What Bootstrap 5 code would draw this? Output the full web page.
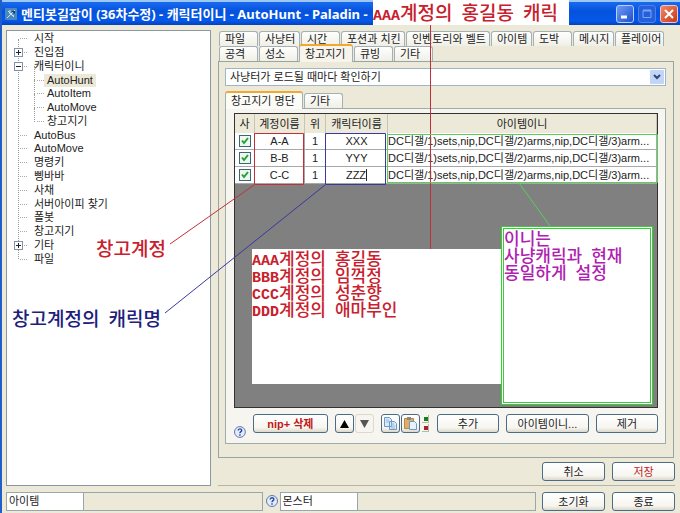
<!DOCTYPE html>
<html lang="ko">
<head>
<meta charset="utf-8">
<meta name="viewport" content="width=device-width, initial-scale=1">
<title>멘티봇길잡이 (36차수정) - 캐릭터이니 - AutoHunt - Paladin</title>
<link href="https://cdn.jsdelivr.net/npm/bootstrap@5.3.0/dist/css/bootstrap.min.css" rel="stylesheet">
<style>
  body { background: #ece9d8; color: #222; font: 11px/14px "Liberation Sans", "Noto Sans CJK KR", sans-serif; }
  .win { min-height: 100vh; border-left: 2px solid #1f5fc8; position: relative; overflow: hidden; }
  .titlebar { height: 25px; border-top: 2px solid #9cc8f4; background: linear-gradient(#1a6af0, #0552dc 40%, #0558e8 80%, #0442c0); color: #fff; font: bold 13px/22px "Noto Sans", "Noto Sans CJK KR", sans-serif; padding: 0 2px 0 3px; }
  .cap-btn { width: 18px; height: 18px; padding: 0; border: 1px solid #b8d0ff; border-radius: 3px; background: linear-gradient(135deg, #6f9cf4, #1c50d0); line-height: 0; }
  .cap-max { border-color: #4a80e8; background: #2560dc; }
  .cap-close { border-color: #f0c8c0; background: linear-gradient(135deg, #f08868, #c83818); }
  .work { padding: 5px 5px 0 4px; gap: 7px; }
  .pane { min-width: 0; padding-top: 1px; }
  .tree { width: 205px; background: #fff; border: 1px solid #8b98a4; padding: 1px 6px; }
  .nodes { height: 234px; display: grid; grid-auto-rows: 1fr; margin: 0; padding: 0; list-style: none; position: relative; }
  .nodes::before { content: ""; position: absolute; left: 5px; top: 7px; bottom: 7px; border-left: 1px dotted #999; }
  .nodes li { display: flex; align-items: center; position: relative; }
  .twig { width: 7px; margin: 0 4px 0 7px; border-top: 1px dotted #aaa; height: 0; }
  .sub .twig { margin: 0 0 0 24px; width: 7px; }
  .sub::before { content: ""; position: absolute; left: 21px; top: -7px; height: 14px; border-left: 1px dotted #999; }
  .pm { position: absolute; left: 1px; width: 9px; height: 9px; padding: 0; border: 1px solid #8093a8; background: #fff; line-height: 0; display: flex; }
  .nodes a { color: #222; text-decoration: none; padding: 0 3px; line-height: 13px; }
  .nodes a.picked { background: #ece9d8; }
  .tabrow { height: 15px; padding-left: 1px; }
  .subtabs { margin-top: 7px; padding-left: 0; }
  .tb { font-size: 11px; line-height: 13px; height: 15px; padding: 0 0 0 5px; margin-right: 1px; text-align: left; white-space: nowrap; color: #222; border: 1px solid #a4b0b4; border-bottom: 0; border-radius: 3px 3px 0 0; background: linear-gradient(#fefefe, #f0efe6); }
  .w39 { width: 39px; } .w41 { width: 41px; } .w49 { width: 49px; } .w64 { width: 64px; } .w84 { width: 84px; }
  .tb.on { border-top: 2px solid #f0a830; background: #f6f4ec; height: 18px; margin-top: -2px; position: relative; width: 54px; z-index: 1; }
  .tb.wide { width: 78px; background: #fbfbf8; }
  .outer { border: 1px solid #98a4a4; background: #ece9d8; padding: 6px 7px 13px 6px; margin-right: 1px; }
  .pick { height: 18px; font-size: 11px; line-height: 14px; padding: 0 18px 0 4px; border: 1px solid #9fb4c4; border-radius: 0; color: #222; background: #fff url("data:image/svg+xml,%3Csvg xmlns='http://www.w3.org/2000/svg' viewBox='0 0 14 14'%3E%3Crect width='14' height='14' rx='1' fill='%23c2d4f8'/%3E%3Cpath d='M4 5l3 3 3-3' fill='none' stroke='%23304870' stroke-width='2'/%3E%3C/svg%3E") no-repeat right 1px center / 14px 14px; }
  .inner { border: 1px solid #a0acac; background: #f6f5f0; padding: 4px 7px 10px 8px; }
  .gridbox { background: #808080; border: 1px solid #333; }
  .gridbox table { width: 100%; table-layout: fixed; border-collapse: separate; border-spacing: 0; color: #222; }
  .gridbox th { height: 19px; font-weight: 400; text-align: center; background: #ece9d8; padding: 0; border-right: 1px solid #c8c4b4; white-space: nowrap; }
  .gridbox td { height: 17px; text-align: center; background: #fff; padding: 0; border: 1px solid #a8a8a8; border-width: 0 1px 1px 0; line-height: 12px; white-space: nowrap; overflow: hidden; }
  .gridbox td.ini { text-align: left; }
  .gridbox .form-check-input { width: 12px; height: 12px; margin: 0 auto; float: none; display: block; border: 1px solid #386878; border-radius: 0; background: #f0f8f0; }
  .gridbox .form-check-input:checked { background: #eef8ee url("data:image/svg+xml,%3Csvg xmlns='http://www.w3.org/2000/svg' viewBox='0 0 10 10'%3E%3Cpath d='M2 4.5l2 2.5 4-5' fill='none' stroke='%2321a038' stroke-width='2'/%3E%3C/svg%3E"); }
  .pb { height: 19px; padding: 0; font-size: 11px; line-height: 16px; color: #222; border: 1px solid #4c6c86; border-radius: 3px; background: linear-gradient(#fff, #f6f5f0 75%, #dcd8cc); }
  .pb:hover { border-color: #4c6c86; }
  .pb.off { border-color: #dcd8cc; background: #f6f5f0; }
  .w19 { width: 19px; } .w63 { width: 63px; } .w76 { width: 76px; }
  .tools { margin-top: 6px; gap: 7px; }
  .pair { gap: 1px; }
  .tools .pb svg, .cap-btn svg { display: block; margin: auto; }
  .tools .help { align-self: flex-end; margin-bottom: -5px; }
  .danger { color: #c01818; }
  .actions { gap: 7px; padding: 4px 0 4px; }
  .rule { border-top: 1px solid #b8b4a4; }
  .status { height: 27px; padding: 0 5px 2px 4px; }
  .status .help { margin: 0 2px 4px 3px; }
  .ends { gap: 7px; margin-left: 6px; }
  .field { height: 19px; border: 1px solid #98a8a8; line-height: 16px; }
  .fname { width: 78px; background: #fff; padding: 0 2px; }
  .notes { position: absolute; left: -2px; top: 0; width: 680px; height: 513px; pointer-events: none; z-index: 3; }
  .note { position: absolute; font: 500 19px/17px "Noto Sans CJK KR", sans-serif; white-space: nowrap; }
  .note i { font: bold 15px/1px "Liberation Mono", monospace; white-space: pre; }
  .red { color: #c8202c; }
  .n-title { left: 373px; top: 0; width: 196px; height: 25px; background: #fff; line-height: 23px; }
  .n-acct { left: 96px; top: 239px; }
  .n-char { left: 12px; top: 309px; color: #20207c; }
  .n-list { left: 252px; top: 249px; width: 249px; height: 135px; background: #fff; font-size: 17px; }
  .n-ini { left: 501px; top: 226px; width: 152px; height: 179px; background: #fff; border: 3px double #34d034; color: #b020b0; font-size: 17px; }
</style>
<script src="https://cdn.jsdelivr.net/npm/bootstrap@5.3.0/dist/js/bootstrap.bundle.min.js"></script>
</head>
<body>
<div class="win d-flex flex-column">
  <header class="titlebar d-flex align-items-center">
    <svg width="12" height="12" viewBox="0 0 12 12" class="me-1"><rect width="12" height="12" rx="1" fill="#4c88c0"/><path d="M2 10L10 2M3 3l6 6M5 2v4l4 2" stroke="#c8e4f8" fill="none"/><path d="M6 3h4v3z" fill="#123c70"/></svg>
    <span class="text-nowrap">멘티봇길잡이 (36차수정) - 캐릭터이니 - AutoHunt - Paladin -</span>
    <span class="ms-auto d-flex gap-1">
      <button class="cap-btn" aria-label="최소화"><svg width="12" height="12"><path d="M2 9h6" stroke="#fff" stroke-width="3"/></svg></button>
      <button class="cap-btn cap-max" aria-label="최대화"><svg width="12" height="12"><path d="M2 2.500h8v7h-8z" stroke="#7ca4f4" fill="none"/><path d="M2 2.500h8" stroke="#7ca4f4" stroke-width="2"/></svg></button>
      <button class="cap-btn cap-close" aria-label="닫기"><svg width="12" height="12"><path d="M2 2l8 8M10 2l-8 8" stroke="#fff" stroke-width="2"/></svg></button>
    </span>
  </header>

  <main class="work d-flex flex-fill">
    <nav class="tree flex-shrink-0">
      <ul class="nodes">
        <li><span class="twig"></span><a href="#">시작</a></li>
        <li><span class="twig"></span><button class="pm" aria-label="펼치기"><svg width="7" height="7"><path d="M1 3.500h5M3.500 1v5" stroke="#222"/></svg></button><a href="#">진입점</a></li>
        <li><span class="twig"></span><button class="pm" aria-label="접기"><svg width="7" height="7"><path d="M1 3.500h5" stroke="#222"/></svg></button><a href="#">캐릭터이니</a></li>
        <li class="sub"><span class="twig"></span><a href="#" class="picked">AutoHunt</a></li>
        <li class="sub"><span class="twig"></span><a href="#">AutoItem</a></li>
        <li class="sub"><span class="twig"></span><a href="#">AutoMove</a></li>
        <li class="sub"><span class="twig"></span><a href="#">창고지기</a></li>
        <li><span class="twig"></span><a href="#">AutoBus</a></li>
        <li><span class="twig"></span><a href="#">AutoMove</a></li>
        <li><span class="twig"></span><a href="#">명령키</a></li>
        <li><span class="twig"></span><a href="#">삥바바</a></li>
        <li><span class="twig"></span><a href="#">사채</a></li>
        <li><span class="twig"></span><a href="#">서버아이피 찾기</a></li>
        <li><span class="twig"></span><a href="#">폴봇</a></li>
        <li><span class="twig"></span><a href="#">창고지기</a></li>
        <li><span class="twig"></span><button class="pm" aria-label="펼치기"><svg width="7" height="7"><path d="M1 3.500h5M3.500 1v5" stroke="#222"/></svg></button><a href="#">기타</a></li>
        <li><span class="twig"></span><a href="#">파일</a></li>
      </ul>
    </nav>

    <section class="pane flex-fill d-flex flex-column">
      <div class="tabrow d-flex">
        <button class="tb w39">파일</button><button class="tb w41">사냥터</button><button class="tb w39">시간</button><button class="tb w64">포션과 치킨</button><button class="tb w84">인벤토리와 벨트</button><button class="tb w41">아이템</button><button class="tb w39">도박</button><button class="tb w41">메시지</button><button class="tb w49">플레이어</button>
      </div>
      <div class="tabrow d-flex">
        <button class="tb w39">공격</button><button class="tb w39">성소</button><button class="tb on">창고지기</button><button class="tb w39">큐빙</button><button class="tb w39">기타</button>
      </div>
      <div class="outer flex-fill d-flex flex-column">
        <select class="form-select pick" aria-label="확인 시점"><option>사냥터가 로드될 때마다 확인하기</option></select>
        <div class="tabrow subtabs d-flex">
          <button class="tb on wide">창고지기 명단</button><button class="tb w39">기타</button>
        </div>
        <div class="inner flex-fill d-flex flex-column">
          <div class="gridbox flex-fill">
            <table>
              <colgroup><col width="20"><col width="50"><col width="21"><col width="62"><col></colgroup>
              <thead><tr><th>사</th><th>계정이름</th><th>위</th><th>캐릭터이름</th><th>아이템이니</th></tr></thead>
              <tbody>
                <tr><td><input class="form-check-input" type="checkbox" aria-label="A-A 사용" checked></td><td>A-A</td><td>1</td><td>XXX</td><td class="ini">DC디갤/1)sets,nip,DC디갤/2)arms,nip,DC디갤/3)arm...</td></tr>
                <tr><td><input class="form-check-input" type="checkbox" aria-label="B-B 사용" checked></td><td>B-B</td><td>1</td><td>YYY</td><td class="ini">DC디갤/1)sets,nip,DC디갤/2)arms,nip,DC디갤/3)arm...</td></tr>
                <tr><td><input class="form-check-input" type="checkbox" aria-label="C-C 사용" checked></td><td>C-C</td><td>1</td><td><span class="border-end border-dark">ZZZ</span></td><td class="ini">DC디갤/1)sets,nip,DC디갤/2)arms,nip,DC디갤/3)arm...</td></tr>
              </tbody>
            </table>
          </div>
          <div class="tools d-flex">
            <svg class="help" width="12" height="12" viewBox="0 0 12 12"><circle cx="6" cy="6" r="5.500" fill="#e4ecfa" stroke="#6078b0"/><path d="M4.200 4.600c0-2.400 3.600-2.400 3.600-.2C7.800 5.700 6 5.600 6 7.200M6 8.200v1.500" stroke="#2848a0" stroke-width="1.400" fill="none"/></svg>
            <button class="btn pb w76 danger fw-bold">nip+ 삭제</button>
            <div class="d-flex pair">
              <button class="btn pb w19" aria-label="위로"><svg width="9" height="8"><path d="M4.500 0L9 8H0z"/></svg></button>
              <button class="btn pb w19 off" aria-label="아래로"><svg width="9" height="8"><path d="M4.500 8L9 0H0z" fill="#555"/></svg></button>
            </div>
            <div class="d-flex pair">
              <button class="btn pb w19" aria-label="복사"><svg width="15" height="15"><path d="M1.500 1.500h5l2 2v7h-7zM6.500 5.500h5l2 2v6h-7z" fill="#dceaf8" stroke="#6c98c8"/><path d="M3 4h3M3 6h3M8 8h3M8 10h4M8 12h4" stroke="#90b4dc"/></svg></button>
              <button class="btn pb w19" aria-label="붙여넣기"><svg width="15" height="15"><path d="M1.500 2.500h9v10h-9z" fill="#e0b060" stroke="#b88848"/><path d="M4 1h4v3H4z" fill="#888"/><path d="M6.500 5.500h5l2 2v6h-7z" fill="#e8f2fc" stroke="#6c98c8"/></svg></button>
              <svg width="9" height="19"><path d="M7.500 1v7M7.500 10v8M1 8.500h7M1 17.500h7" stroke="#b8b8a8"/><path d="M3 3h4v4H3z" fill="#188018"/><path d="M3 12h4v4H3z" fill="#a02828"/></svg>
            </div>
            <button class="btn pb w63 ms-auto">추가</button>
            <button class="btn pb w84">아이템이니...</button>
            <button class="btn pb w63">제거</button>
          </div>
        </div>
      </div>
      <div class="actions d-flex justify-content-end">
        <button class="btn pb w63">취소</button><button class="btn pb w63 danger">저장</button>
      </div>
      <div class="rule"></div>
    </section>
  </main>

  <footer class="status d-flex align-items-end">
    <label class="field fname" for="item">아이템</label><input id="item" class="field bg-transparent border-start-0 flex-fill w-25" readonly>
    <svg class="help" width="12" height="12" viewBox="0 0 12 12"><circle cx="6" cy="6" r="5.500" fill="#e4ecfa" stroke="#6078b0"/><path d="M4.200 4.600c0-2.400 3.600-2.400 3.600-.2C7.800 5.700 6 5.600 6 7.200M6 8.200v1.500" stroke="#2848a0" stroke-width="1.400" fill="none"/></svg>
    <label class="field fname" for="mob">몬스터</label><input id="mob" class="field bg-transparent border-start-0 flex-fill w-25" readonly>
    <div class="ends d-flex">
      <button class="btn pb w63">초기화</button>
      <button class="btn pb w63">종료</button>
    </div>
  </footer>

  <div class="notes">
    <div class="note n-title red"><i>AAA</i>계정의<i> </i>홍길동<i> </i>캐릭</div>
    <div class="note n-acct red">창고계정</div>
    <div class="note n-char">창고계정의<i> </i>캐릭명</div>
    <div class="note n-list red"><i>AAA</i>계정의<i> </i>홍길동<br><i>BBB</i>계정의<i> </i>임꺽정<br><i>CCC</i>계정의<i> </i>성춘향<br><i>DDD</i>계정의<i> </i>애마부인</div>
    <svg class="position-absolute top-0 start-0" width="680" height="513" fill="none">
      <path d="M430.500 25V249M254.500 133.500h49v51h-49zM254 185L170 244" stroke="#c03038"/>
      <path d="M325.500 133.500h60v51h-60zM325 185L165 313" stroke="#3838a0"/>
      <path d="M387.500 134.500h270v48h-270zM519 183L550 226" stroke="#58d058"/>
    </svg>
    <div class="note n-ini">이니는<br>사냥캐릭과<i> </i>현재<br>동일하게<i> </i>설정</div>
  </div>
</div>
</body>
</html>
